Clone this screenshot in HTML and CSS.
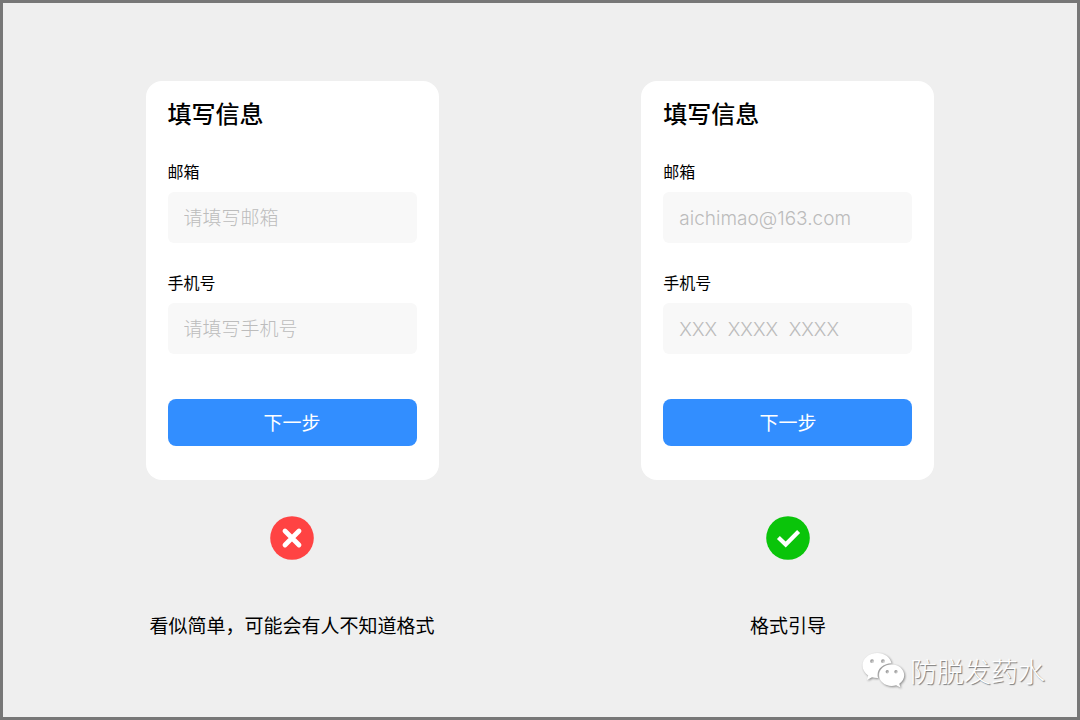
FILE: index.html
```html
<!DOCTYPE html>
<html lang="zh-CN">
<head>
<meta charset="utf-8">
<meta name="viewport" content="width=device-width, initial-scale=1">
<title>填写信息</title>
<link rel="stylesheet" href="styles.css">
</head>
<body>
<main class="board">
  <section class="example">
    <form class="card">
      <h2 class="card-title">填写信息</h2>
      <div class="field">
        <label class="label" for="email-a">邮箱</label>
        <input class="input" id="email-a" type="email" placeholder="请填写邮箱">
      </div>
      <div class="field">
        <label class="label" for="phone-a">手机号</label>
        <input class="input" id="phone-a" type="tel" placeholder="请填写手机号">
      </div>
      <button class="next" type="button">下一步</button>
    </form>
    <svg class="mark" viewBox="0 0 44 44" aria-hidden="true">
      <circle cx="22" cy="22" r="21.8" fill="#ff4343"/>
      <path d="M15 15 29 29M29 15 15 29" fill="none" stroke="#fff" stroke-width="4.8" stroke-linecap="round"/>
    </svg>
    <p class="caption">看似简单，可能会有人不知道格式</p>
  </section>
  <section class="example">
    <form class="card">
      <h2 class="card-title">填写信息</h2>
      <div class="field">
        <label class="label" for="email-b">邮箱</label>
        <input class="input" id="email-b" type="email" placeholder="aichimao@163.com">
      </div>
      <div class="field">
        <label class="label" for="phone-b">手机号</label>
        <input class="input" id="phone-b" type="tel" placeholder="XXX&nbsp; XXXX&nbsp; XXXX">
      </div>
      <button class="next" type="button">下一步</button>
    </form>
    <svg class="mark" viewBox="0 0 44 44" aria-hidden="true">
      <circle cx="22" cy="22" r="21.8" fill="#0ac40a"/>
      <path d="M12.4 21.600 19.700 28.600 32.600 15.600" fill="none" stroke="#fff" stroke-width="4.2"/>
    </svg>
    <p class="caption">格式引导</p>
  </section>
  <div class="watermark">
    <svg class="watermark-logo" viewBox="0 0 44 38" aria-hidden="true">
      <path fill="#fff" fill-rule="evenodd" d="M15.5 1C7 1 .5 6.500 .5 13.500c0 4.100 2.200 7.500 5.700 9.900L4.800 28l5.200-2.700c2.100.6 4 .9 6.100.8-.3-1-.5-2-.5-3.100 0-6.800 6.300-11.500 13.900-11.700C28 5.200 22.500 1 15.500 1ZM10.100 7.300a1.900 1.900 0 1 1 0 3.800 1.900 1.900 0 0 1 0-3.800Zm10.900 0a1.900 1.900 0 1 1 0 3.800 1.900 1.900 0 0 1 0-3.800Z"/>
      <path fill="#fff" fill-rule="evenodd" d="M29.700 12.500c-7 0-12.600 4.700-12.600 10.700s5.600 10.700 12.600 10.700c1.500 0 3-.3 4.400-.7l4.400 2.400-1.200-3.900c3-2.100 4.900-5.100 4.900-8.500 0-6-5.600-10.700-12.500-10.700Zm-4.400 5.500a1.700 1.700 0 1 1 0 3.400 1.700 1.700 0 0 1 0-3.400Zm8.700 0a1.700 1.700 0 1 1 0 3.400 1.700 1.700 0 0 1 0-3.400Z"/>
    </svg>
    <span class="watermark-name">防脱发药水</span>
  </div>
</main>
</body>
</html>
```
FILE: styles.css
```css
* {
  box-sizing: border-box;
}

body {
  margin: 0;
  background: #efefef;
  color: #000;
  font-family: "Noto Sans CJK SC", sans-serif;
}

.board {
  position: relative;
  display: grid;
  grid-template-columns: 1fr 1fr;
  column-gap: 25.7%;
  align-items: start;
  min-height: 100vh;
  padding: 78px 13.2% 48px;
  border: 3px solid #777;
}

.example {
  display: flex;
  flex-direction: column;
  align-items: center;
}

.card {
  display: flex;
  flex-direction: column;
  width: 100%;
  padding: 15px 22px 34px;
  border-radius: 16px;
  background: #fff;
}

.card-title {
  margin: 0 0 2px;
  font-size: 24px;
  font-weight: 500;
  line-height: 34px;
}

.field {
  display: flex;
  flex-direction: column;
  gap: 9px;
  margin-top: 27px;
}

.label {
  font-size: 16px;
  line-height: 24px;
}

.input {
  width: 100%;
  height: 51px;
  padding: 1px 16px 0;
  border: 0;
  border-radius: 6px;
  background: #f8f8f8;
  color: #000;
  font: 300 19px Inter, "Noto Sans CJK SC", sans-serif;
}

.input::placeholder {
  color: #bcbcbc;
  opacity: 1;
}

.next {
  height: 47px;
  margin-top: 45px;
  padding: 0 0 2px;
  border: 0;
  border-radius: 8px;
  background: #328eff;
  color: #fff;
  font: 400 19px "Noto Sans CJK SC", sans-serif;
}

.mark {
  width: 44px;
  height: 44px;
  margin-top: 36px;
}

.caption {
  margin: 51px 0 0;
  font-size: 19px;
  line-height: 28px;
  white-space: nowrap;
}

.watermark {
  position: absolute;
  right: 32px;
  bottom: 26px;
  display: flex;
  align-items: center;
  gap: 4px;
  color: #fff;
}

.watermark-logo {
  width: 44px;
  height: 38px;
  filter: drop-shadow(1px 1px 1px #888);
}

.watermark-name {
  font-size: 27px;
  font-weight: 300;
  line-height: 40px;
  text-shadow: 1px 1px 1px #777;
}
```
